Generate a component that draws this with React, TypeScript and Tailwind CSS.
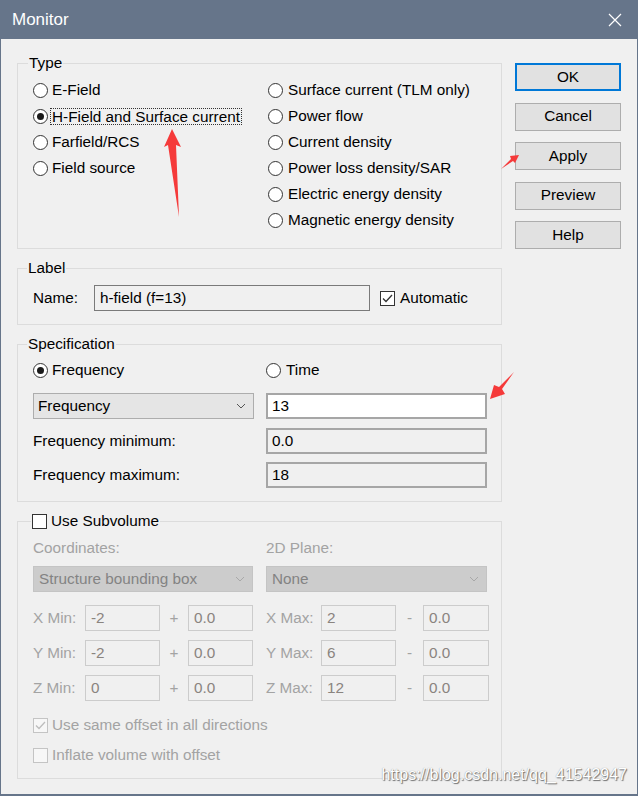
import React from "react";

type RadioProps = { label: string; checked?: boolean; focus?: boolean; gap?: string };

function Radio({ label, checked, focus, gap = "ml-[4px]" }: RadioProps) {
  return (
    <div className="flex h-[26px] items-center">
      <span className="flex h-[15px] w-[15px] shrink-0 items-center justify-center rounded-full border border-[#333333] bg-white">
        {checked && <span className="h-[7px] w-[7px] rounded-full bg-[#1a1a1a]" />}
      </span>
      <span className={gap + (focus ? " outline outline-1 outline-dotted outline-[#333] px-[1px] leading-[15px]" : "")}>
        {label}
      </span>
    </div>
  );
}

function Check({ checked, disabled }: { checked?: boolean; disabled?: boolean }) {
  const box = disabled ? "border-[#c4c4c4] bg-[#f7f7f7]" : "border-[#333333] bg-white";
  const stroke = disabled ? "#bdbdbd" : "#333333";
  return (
    <span className={"flex h-[15px] w-[15px] shrink-0 items-center justify-center border " + box}>
      {checked && (
        <svg width="11" height="9" viewBox="0 0 11 9">
          <path d="M1 4.5 L4 7.5 L10 1" fill="none" stroke={stroke} strokeWidth="1.3" />
        </svg>
      )}
    </span>
  );
}

function Chevron({ color }: { color: string }) {
  return (
    <svg width="10" height="6" viewBox="0 0 10 6">
      <path d="M1 1 L5 5 L9 1" fill="none" stroke={color} strokeWidth="1" />
    </svg>
  );
}

function Button({ label, primary }: { label: string; primary?: boolean }) {
  return (
    <div
      className={
        "flex h-[28px] w-[106px] items-center justify-center bg-[#e1e1e1] " +
        (primary ? "border-2 border-[#0078d7]" : "border border-[#adadad]")
      }
    >
      {label}
    </div>
  );
}

function DisabledBox({ value, w }: { value: string; w: string }) {
  return (
    <div className={"flex h-[26px] items-center border border-[#cccccc] pl-[5px] text-[#8a847f] " + w}>
      {value}
    </div>
  );
}

function CoordRow({ axis, min, max }: { axis: string; min: string; max: string }) {
  return (
    <div className="flex items-center text-[#a3a3a3]">
      <span className="w-[52px]">{axis} Min:</span>
      <DisabledBox value={min} w="w-[75px]" />
      <span className="w-[28px] text-center">+</span>
      <DisabledBox value="0.0" w="w-[65px]" />
      <span className="w-[13px]" />
      <span className="w-[55px]">{axis} Max:</span>
      <DisabledBox value={max} w="w-[75px]" />
      <span className="w-[27px] text-center">-</span>
      <DisabledBox value="0.0" w="w-[66px]" />
    </div>
  );
}

export default function App() {
  return (
    <div className="relative h-[796px] w-[638px] overflow-hidden border-x border-b-2 border-[#66758a] bg-[#f0f0f0] font-['Liberation_Sans',Arial,sans-serif] text-[15.3px] text-black">
      {/* title bar */}
      <div className="flex h-[39px] items-center justify-between bg-[#66758a] pl-[11px] pr-[15px] text-white">
        <span className="text-[17px]">Monitor</span>
        <svg width="14" height="14" viewBox="0 0 14 14">
          <path d="M1 1 L13 13 M13 1 L1 13" stroke="#ffffff" strokeWidth="1.2" />
        </svg>
      </div>

      <div className="flex pl-[16px]">
        <div className="flex w-[485px] flex-col pt-[15px]">
          {/* Type */}
          <fieldset className="border border-[#dcdcdc] pb-[15px] pl-[15px] pt-[5px]">
            <legend className="ml-[-5px] px-[1px] leading-[18px]">Type</legend>
            <div className="grid grid-cols-[235px_1fr]">
              <div className="flex flex-col">
                <Radio label="E-Field" />
                <Radio label="H-Field and Surface current" checked focus gap="ml-[3px]" />
                <Radio label="Farfield/RCS" />
                <Radio label="Field source" />
              </div>
              <div className="flex flex-col">
                <Radio label="Surface current (TLM only)" gap="ml-[5px]" />
                <Radio label="Power flow" gap="ml-[5px]" />
                <Radio label="Current density" gap="ml-[5px]" />
                <Radio label="Power loss density/SAR" gap="ml-[5px]" />
                <Radio label="Electric energy density" gap="ml-[5px]" />
                <Radio label="Magnetic energy density" gap="ml-[5px]" />
              </div>
            </div>
          </fieldset>

          {/* Label */}
          <fieldset className="mt-[10px] border border-[#dcdcdc] pb-[13px] pl-[15px] pt-[8px]">
            <legend className="ml-[-6px] px-[1px] leading-[18px]">Label</legend>
            <div className="flex items-center">
              <span className="w-[61px]">Name:</span>
              <div className="flex h-[26px] w-[276px] items-center border border-[#7a7a7a] bg-[#f0f0f0] pl-[5px]">
                h-field (f=13)
              </div>
              <span className="ml-[10px]">
                <Check checked />
              </span>
              <span className="ml-[5px]">Automatic</span>
            </div>
          </fieldset>

          {/* Specification */}
          <fieldset className="mt-[10px] border border-[#dcdcdc] pb-[13px] pl-[15px] pt-[4px]">
            <legend className="ml-[-6px] px-[1px] leading-[18px]">Specification</legend>
            <div className="flex">
              <div className="w-[233px]">
                <Radio label="Frequency" checked />
              </div>
              <Radio label="Time" gap="ml-[5px]" />
            </div>
            <div className="mt-[10px] flex">
              <div className="w-[233px]">
                <div className="flex h-[26px] w-[221px] items-center justify-between border border-[#adadad] bg-[#e5e5e5] pl-[4px] pr-[7px]">
                  <span>Frequency</span>
                  <Chevron color="#555555" />
                </div>
              </div>
              <div className="flex h-[26px] w-[221px] items-center border-2 border-[#a6a6a6] bg-white pl-[4px]">13</div>
            </div>
            <div className="mt-[9px] flex items-center">
              <span className="w-[233px]">Frequency minimum:</span>
              <div className="flex h-[26px] w-[221px] items-center border-2 border-[#a6a6a6] pl-[4px]">0.0</div>
            </div>
            <div className="mt-[8px] flex items-center">
              <span className="w-[233px]">Frequency maximum:</span>
              <div className="flex h-[26px] w-[221px] items-center border-2 border-[#a6a6a6] pl-[4px]">18</div>
            </div>
          </fieldset>

          {/* Subvolume */}
          <fieldset className="mt-[10px] border border-[#dcdcdc] pb-[14px] pl-[15px] pt-[9px]">
            <legend className="ml-[-2px] flex items-center px-[1px] leading-[18px]">
              <Check />
              <span className="ml-[4px]">Use Subvolume</span>
            </legend>
            <div className="flex h-[18px] items-center text-[#a3a3a3]">
              <span className="w-[233px]">Coordinates:</span>
              <span>2D Plane:</span>
            </div>
            <div className="mt-[9px] flex">
              <div className="w-[233px]">
                <div className="flex h-[26px] w-[220px] items-center justify-between border border-[#c4c4c4] bg-[#cccccc] pl-[5px] pr-[7px] text-[#838383]">
                  <span>Structure bounding box</span>
                  <Chevron color="#a8a8a8" />
                </div>
              </div>
              <div className="flex h-[26px] w-[221px] items-center justify-between border border-[#c4c4c4] bg-[#cccccc] pl-[5px] pr-[7px] text-[#838383]">
                <span>None</span>
                <Chevron color="#a8a8a8" />
              </div>
            </div>
            <div className="mt-[13px] flex flex-col gap-[9px]">
              <CoordRow axis="X" min="-2" max="2" />
              <CoordRow axis="Y" min="-2" max="6" />
              <CoordRow axis="Z" min="0" max="12" />
            </div>
            <div className="mt-[15px] flex h-[18px] items-center text-[#a3a3a3]">
              <Check checked disabled />
              <span className="ml-[4px]">Use same offset in all directions</span>
            </div>
            <div className="mt-[12px] flex h-[18px] items-center text-[#a3a3a3]">
              <Check disabled />
              <span className="ml-[4px]">Inflate volume with offset</span>
            </div>
          </fieldset>
        </div>

        {/* buttons */}
        <div className="ml-[13px] flex flex-col gap-[11.5px] pt-[24px]">
          <Button label="OK" primary />
          <Button label="Cancel" />
          <Button label="Apply" />
          <Button label="Preview" />
          <Button label="Help" />
        </div>
      </div>

      {/* watermark */}
      <span className="absolute bottom-[7px] right-[10px] text-[16px] text-white [text-shadow:1px_1px_1px_#6f6f6f,0_0_1px_#8c8c8c]">
        https://blog.csdn.net/qq_41542947
      </span>

      {/* red annotation arrows */}
      <svg className="pointer-events-none absolute left-0 top-0" width="638" height="796" viewBox="0 0 638 796">
        <polygon points="171,129 180,147 175,145 178,217 167,145 163,147" fill="#f53a3a" />
        <polygon points="518,155 514,163 512,161 500,169 510,159 509,156" fill="#f53a3a" />
        <polygon points="489,399 493,385 498,387 513,372 501,389 504,394" fill="#f53a3a" />
      </svg>
    </div>
  );
}
